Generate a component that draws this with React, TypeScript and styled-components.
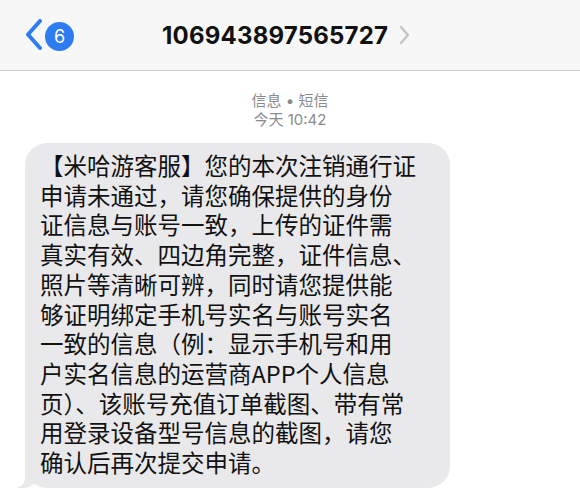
import styled, { createGlobalStyle } from "styled-components";

const GlobalStyle = createGlobalStyle`
  html, body {
    margin: 0;
    padding: 0;
    background: #ffffff;
  }
  body {
    width: 580px;
    height: 500px;
    overflow: hidden;
    font-family: "Inter", "Noto Sans CJK SC", sans-serif;
  }
`;

const Header = styled.div`
  height: 70px;
  background: #f7f7f7;
  border-bottom: 1px solid #cfcfcf;
  display: flex;
  align-items: center;
  padding-left: 25px;
  box-sizing: content-box;
`;

const Back = styled.div`
  display: flex;
  align-items: center;
  gap: 2px;
  color: #2d7cf2;
`;

const Badge = styled.div`
  width: 29px;
  height: 29px;
  border-radius: 50%;
  background: #2d7cf2;
  color: #ffffff;
  font-size: 18px;
  display: flex;
  align-items: center;
  justify-content: center;
  margin-top: 2px;
`;

const TitleGroup = styled.div`
  display: flex;
  align-items: center;
  gap: 11px;
  margin-left: 88px;
`;

const Title = styled.div`
  font-size: 24px;
  font-weight: 700;
  color: #111111;
  letter-spacing: 0.2px;
`;

const Meta = styled.div`
  padding-top: 20px;
  text-align: center;
  font-size: 15px;
  line-height: 19px;
  color: #8b8b8f;
`;

const Bubble = styled.div`
  position: relative;
  margin: 14px 0 0 25px;
  width: 425px;
  box-sizing: border-box;
  padding: 8px 0 10px 15px;
  background: #e9e9eb;
  border-radius: 22px;
  font-family: "Noto Sans CJK SC", sans-serif;
  font-size: 23.5px;
  line-height: 29.7px;
  color: #111111;
  white-space: nowrap;

  &::before {
    content: "";
    position: absolute;
    bottom: 0;
    left: -8px;
    width: 22px;
    height: 22px;
    background: #e9e9eb;
    border-bottom-right-radius: 16px;
  }

  &::after {
    content: "";
    position: absolute;
    bottom: 0;
    left: -12px;
    width: 12px;
    height: 22px;
    background: #ffffff;
    border-bottom-right-radius: 10px;
  }
`;

const Line = styled.div`
  position: relative;
  z-index: 1;
`;

const lines = [
  "【米哈游客服】您的本次注销通行证",
  "申请未通过，请您确保提供的身份",
  "证信息与账号一致，上传的证件需",
  "真实有效、四边角完整，证件信息、",
  "照片等清晰可辨，同时请您提供能",
  "够证明绑定手机号实名与账号实名",
  "一致的信息（例：显示手机号和用",
  "户实名信息的运营商APP个人信息",
  "页）、该账号充值订单截图、带有常",
  "用登录设备型号信息的截图，请您",
  "确认后再次提交申请。",
];

const App = () => {
  return (
    <>
      <GlobalStyle />
      <Header>
        <Back>
          <svg width="18" height="32" viewBox="0 0 18 32">
            <polyline
              points="15,2 3,15.5 15,29"
              fill="none"
              stroke="currentColor"
              strokeWidth="4"
              strokeLinecap="round"
              strokeLinejoin="round"
            />
          </svg>
          <Badge>6</Badge>
        </Back>
        <TitleGroup>
          <Title>106943897565727</Title>
          <svg width="11" height="20" viewBox="0 0 11 20">
            <polyline
              points="2,2 9,10 2,18"
              fill="none"
              stroke="#c4c4c8"
              strokeWidth="2.4"
              strokeLinecap="round"
              strokeLinejoin="round"
            />
          </svg>
        </TitleGroup>
      </Header>
      <Meta>
        <div>信息 • 短信</div>
        <div>今天 10:42</div>
      </Meta>
      <Bubble>
        {lines.map((l) => (
          <Line key={l}>{l}</Line>
        ))}
      </Bubble>
    </>
  );
};

export default App;
